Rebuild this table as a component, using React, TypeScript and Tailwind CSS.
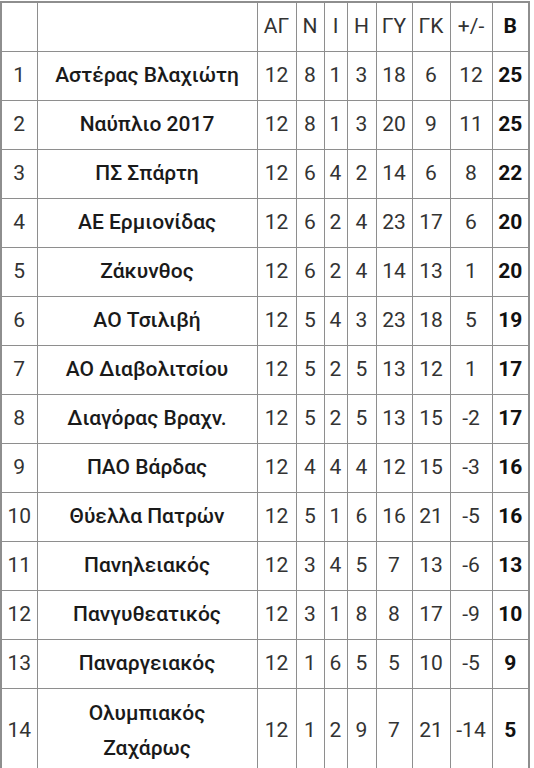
const rows: [number, string, number, number, number, number, number, number, number, number][] = [
  [1, "Αστέρας Βλαχιώτη", 12, 8, 1, 3, 18, 6, 12, 25],
  [2, "Ναύπλιο 2017", 12, 8, 1, 3, 20, 9, 11, 25],
  [3, "ΠΣ Σπάρτη", 12, 6, 4, 2, 14, 6, 8, 22],
  [4, "ΑΕ Ερμιονίδας", 12, 6, 2, 4, 23, 17, 6, 20],
  [5, "Ζάκυνθος", 12, 6, 2, 4, 14, 13, 1, 20],
  [6, "ΑΟ Τσιλιβή", 12, 5, 4, 3, 23, 18, 5, 19],
  [7, "ΑΟ Διαβολιτσίου", 12, 5, 2, 5, 13, 12, 1, 17],
  [8, "Διαγόρας Βραχν.", 12, 5, 2, 5, 13, 15, -2, 17],
  [9, "ΠΑΟ Βάρδας", 12, 4, 4, 4, 12, 15, -3, 16],
  [10, "Θύελλα Πατρών", 12, 5, 1, 6, 16, 21, -5, 16],
  [11, "Πανηλειακός", 12, 3, 4, 5, 7, 13, -6, 13],
  [12, "Πανγυθεατικός", 12, 3, 1, 8, 8, 17, -9, 10],
  [13, "Παναργειακός", 12, 1, 6, 5, 5, 10, -5, 9],
  [14, "Ολυμπιακός Ζαχάρως", 12, 1, 2, 9, 7, 21, -14, 5],
];

const widths = [36, 220, 39, 28, 23, 29, 36, 38, 42, 37];
const headers = ["ΑΓ", "Ν", "Ι", "Η", "ΓΥ", "ΓΚ", "+/-"];

const cell = "border border-[#8e8e8e] text-center align-middle p-0";

export default function App() {
  return (
    <div className="min-h-screen bg-white pt-px" style={{ fontFamily: "Roboto, 'Noto Sans', sans-serif" }}>
      <table className="table-fixed border-collapse border-2 border-[#8e8e8e] text-[21px] leading-[35px] text-[#333]">
        <colgroup>
          {widths.map((w, i) => (
            <col key={i} style={{ width: w }} />
          ))}
        </colgroup>
        <thead>
          <tr className="h-[49px]">
            <th className={cell}></th>
            <th className={cell}></th>
            {headers.map((h) => (
              <th key={h} className={`${cell} font-normal`}>
                {h}
              </th>
            ))}
            <th className={`${cell} font-bold text-[#111]`}>Β</th>
          </tr>
        </thead>
        <tbody>
          {rows.map((r) => (
            <tr key={r[0]} className="h-[49px]">
              <td className={cell}>{r[0]}</td>
              <td className={`${cell} px-2 font-medium text-[#1a1a1a]`}>
                {r[0] === 14 ? (
                  <div className="py-[7px]">
                    Ολυμπιακός
                    <br />
                    Ζαχάρως
                  </div>
                ) : (
                  r[1]
                )}
              </td>
              {r.slice(2, 9).map((v, i) => (
                <td key={i} className={cell}>
                  {v}
                </td>
              ))}
              <td className={`${cell} font-bold text-[#111]`}>{r[9]}</td>
            </tr>
          ))}
        </tbody>
      </table>
    </div>
  );
}
